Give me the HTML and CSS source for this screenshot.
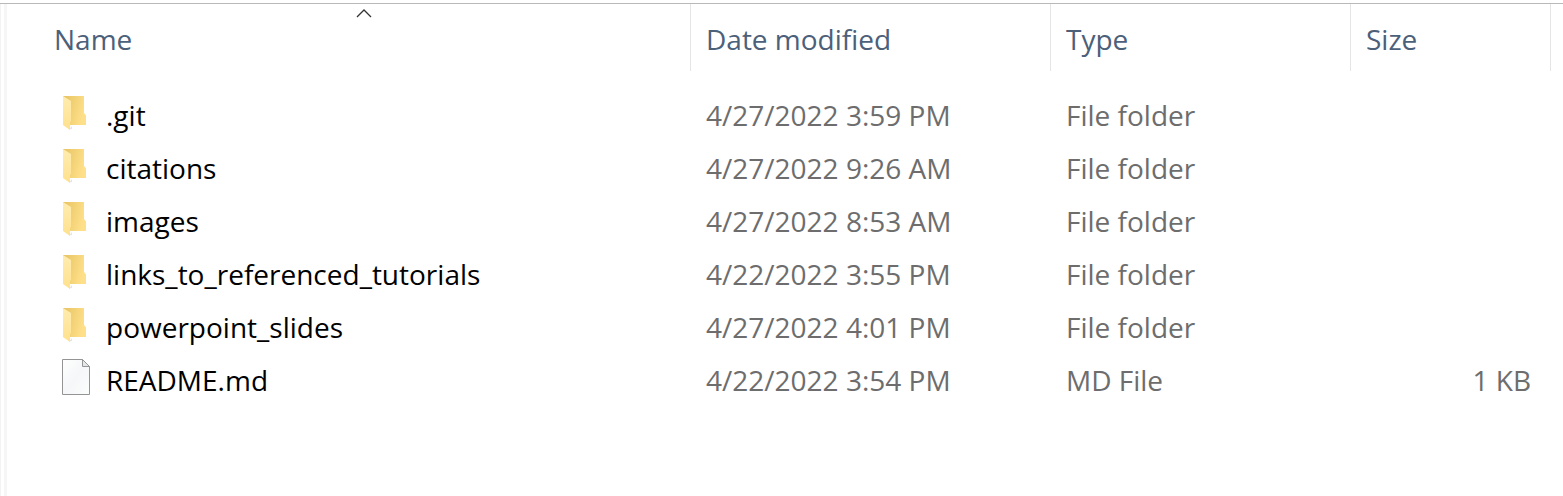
FILE: index.html
```html
<!DOCTYPE html>
<html lang="en">
<head>
<meta charset="utf-8">
<title>File list</title>
<link rel="stylesheet" href="styles.css">
</head>
<body>
<svg class="defs" aria-hidden="true">
  <defs>
    <linearGradient id="back" x1="0" y1="0" x2="1" y2="0.3">
      <stop offset="0" stop-color="#e6c362"/>
      <stop offset="1" stop-color="#ffe08a"/>
    </linearGradient>
    <linearGradient id="flap" x1="0" y1="0" x2="0" y2="1">
      <stop offset="0" stop-color="#ffecb0"/>
      <stop offset="1" stop-color="#ffe18d"/>
    </linearGradient>
    <linearGradient id="paper" x1="0" y1="0" x2="1" y2="1">
      <stop offset="0" stop-color="#ffffff"/>
      <stop offset="0.5" stop-color="#f5f7f8"/>
      <stop offset="1" stop-color="#fcfdfd"/>
    </linearGradient>
    <symbol id="folder" viewBox="0 0 28 36">
      <path d="M7 35.500L10 35V32Z" fill="#e4e4e4"/>
      <path d="M1 2H22V19L24 21.500V31H8L1 21Z" fill="url(#back)"/>
      <path d="M1 2L9 7V27L8 28V36L1 31Z" fill="url(#flap)"/>
    </symbol>
    <symbol id="file" viewBox="0 0 28 36">
      <path d="M0.500 0.500H20.500L27.500 7.500V35.500H0.500Z" fill="url(#paper)" stroke="#949494"/>
      <path d="M20.500 0.500V7.500H27.500Z" fill="#e4e7e9" stroke="#949494"/>
    </symbol>
  </defs>
</svg>
<main class="pane">
  <table class="files">
    <colgroup>
      <col>
      <col class="col-date">
      <col class="col-type">
      <col class="col-size">
      <col class="col-end">
    </colgroup>
    <thead>
      <tr>
        <th scope="col" aria-sort="ascending">
          <button class="sort" type="button">Name</button>
          <svg class="caret" viewBox="0 0 16 9" aria-hidden="true"><path d="M1 8L8 1L15 8"/></svg>
        </th>
        <th scope="col"><button class="sort" type="button">Date modified</button></th>
        <th scope="col"><button class="sort" type="button">Type</button></th>
        <th scope="col"><button class="sort" type="button">Size</button></th>
        <td></td>
      </tr>
    </thead>
    <tbody>
      <tr><td><div class="name"><svg class="icon"><use href="#folder"/></svg><span>.git</span></div></td><td>4/27/2022 3:59 PM</td><td>File folder</td><td class="size"></td><td></td></tr>
      <tr><td><div class="name"><svg class="icon"><use href="#folder"/></svg><span>citations</span></div></td><td>4/27/2022 9:26 AM</td><td>File folder</td><td class="size"></td><td></td></tr>
      <tr><td><div class="name"><svg class="icon"><use href="#folder"/></svg><span>images</span></div></td><td>4/27/2022 8:53 AM</td><td>File folder</td><td class="size"></td><td></td></tr>
      <tr><td><div class="name"><svg class="icon"><use href="#folder"/></svg><span>links_to_referenced_tutorials</span></div></td><td>4/22/2022 3:55 PM</td><td>File folder</td><td class="size"></td><td></td></tr>
      <tr><td><div class="name"><svg class="icon"><use href="#folder"/></svg><span>powerpoint_slides</span></div></td><td>4/27/2022 4:01 PM</td><td>File folder</td><td class="size"></td><td></td></tr>
      <tr><td><div class="name"><svg class="icon"><use href="#file"/></svg><span>README.md</span></div></td><td>4/22/2022 3:54 PM</td><td>MD File</td><td class="size">1 KB</td><td></td></tr>
    </tbody>
  </table>
</main>
</body>
</html>
```
FILE: styles.css
```css
* {
  box-sizing: border-box;
}

body {
  margin: 0;
  padding-top: 3px;
  min-height: 100vh;
  display: flex;
  background: #fff;
  font-family: "Open Sans", "Noto Sans", sans-serif;
  font-size: 28px;
  line-height: 36px;
  color: #6d6d6d;
}

.defs {
  position: absolute;
  width: 0;
  height: 0;
}

.pane {
  flex: 1;
  padding-left: 38px;
  border-top: 1px solid #b9b9b9;
  background: linear-gradient(90deg, #f3f3f3 1px, #fff 1px, #fff 4px, #f6f6f6 4px, #f6f6f6 7px, #fff 7px);
}

.files {
  width: 100%;
  table-layout: fixed;
  border-collapse: separate;
  border-spacing: 0;
}

.col-date { width: 360px; }
.col-type { width: 300px; }
.col-size { width: 200px; }
.col-end { width: 13px; }

.files th,
.files td {
  padding: 0 0 0 16px;
  text-align: left;
  font-weight: 400;
  white-space: nowrap;
}

.files thead th,
.files thead td {
  position: relative;
  height: 67px;
  padding-top: 2px;
  border-left: 1px solid #e5e5e5;
}

.files thead td,
.files tbody td:last-child {
  padding-left: 0;
}

.files thead th:first-child {
  border-left: 0;
}

.files thead th + th {
  padding-left: 15px;
}

.sort {
  padding: 0;
  border: 0;
  background: none;
  font: inherit;
  color: #4c607a;
}

.caret {
  position: absolute;
  top: 5px;
  left: 50%;
  width: 16px;
  height: 9px;
  margin-left: -8px;
  fill: none;
  stroke: #333;
  stroke-width: 1.3;
}

.files tbody::before {
  content: "";
  display: block;
  height: 17px;
}

.files tbody td {
  height: 53px;
}

.files tbody td:first-child {
  padding-left: 24px;
}

.name {
  display: flex;
  align-items: center;
  gap: 16px;
  color: #000;
}

.icon {
  width: 28px;
  height: 36px;
  margin-bottom: 6px;
}

.files tbody .size {
  padding-right: 19px;
  text-align: right;
}
```
